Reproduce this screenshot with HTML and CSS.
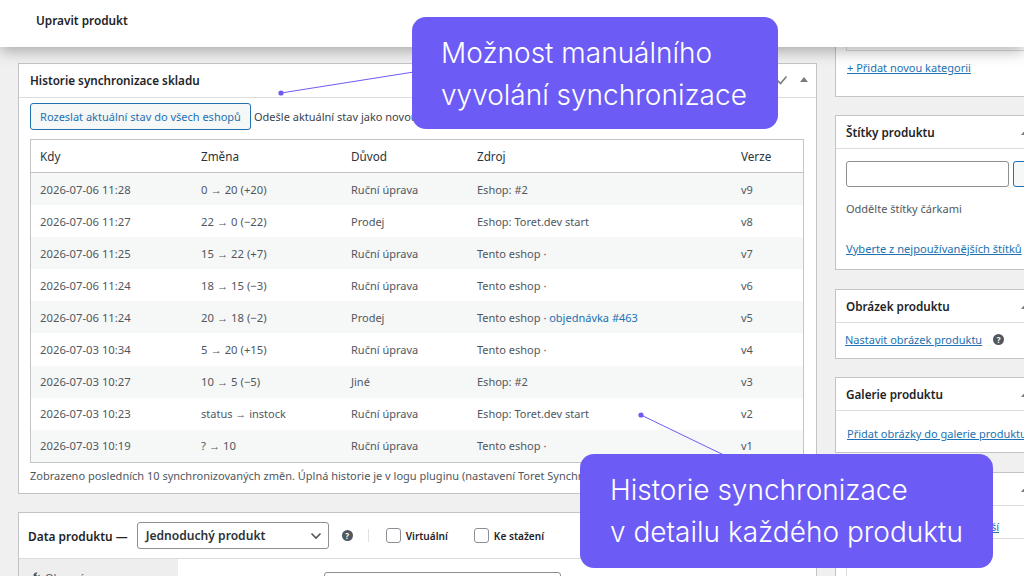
FILE: index.html
```html
<!DOCTYPE html>
<html lang="cs">
<head>
  <meta charset="UTF-8" />
  <title>Upravit produkt</title>
  <link rel="stylesheet" href="styles.css">
</head>
<body>

  <header class="top-bar">Upravit produkt</header>

  <div class="columns">
    <div class="main-col">

      <section class="box history-box">
        <div class="box-head main-head">
          <h2>Historie synchronizace skladu</h2>
          <div class="box-tools">
            <svg width="12" height="12" viewBox="0 0 12 12"><path d="M1.5 6.5 4.5 9.5 10.5 2.5" fill="none" stroke="#787c82" stroke-width="1.6"/></svg>
            <span class="caret"></span>
          </div>
        </div>
        <div class="history-body">
          <div class="sync-row">
            <button class="sync-btn">Rozeslat aktuální stav do všech eshopů</button>
            <span>Odešle aktuální stav jako novou verzi</span>
          </div>
          <table class="history">
            <thead>
              <tr><th class="c-when">Kdy</th><th class="c-change">Změna</th><th class="c-reason">Důvod</th><th class="c-source">Zdroj</th><th>Verze</th></tr>
            </thead>
            <tbody>
              <tr><td>2026-07-06 11:28</td><td>0 → 20 (+20)</td><td>Ruční úprava</td><td>Eshop: #2</td><td>v9</td></tr>
              <tr><td>2026-07-06 11:27</td><td>22 → 0 (−22)</td><td>Prodej</td><td>Eshop: Toret.dev start</td><td>v8</td></tr>
              <tr><td>2026-07-06 11:25</td><td>15 → 22 (+7)</td><td>Ruční úprava</td><td>Tento eshop ·</td><td>v7</td></tr>
              <tr><td>2026-07-06 11:24</td><td>18 → 15 (−3)</td><td>Ruční úprava</td><td>Tento eshop ·</td><td>v6</td></tr>
              <tr><td>2026-07-06 11:24</td><td>20 → 18 (−2)</td><td>Prodej</td><td>Tento eshop · <a href="#">objednávka #463</a></td><td>v5</td></tr>
              <tr><td>2026-07-03 10:34</td><td>5 → 20 (+15)</td><td>Ruční úprava</td><td>Tento eshop ·</td><td>v4</td></tr>
              <tr><td>2026-07-03 10:27</td><td>10 → 5 (−5)</td><td>Jiné</td><td>Eshop: #2</td><td>v3</td></tr>
              <tr><td>2026-07-03 10:23</td><td class="status">status → instock</td><td>Ruční úprava</td><td>Eshop: Toret.dev start</td><td>v2</td></tr>
              <tr><td>2026-07-03 10:19</td><td>? → 10</td><td>Ruční úprava</td><td>Tento eshop ·</td><td>v1</td></tr>
            </tbody>
          </table>
          <p class="note">Zobrazeno posledních 10 synchronizovaných změn. Úplná historie je v logu pluginu (nastavení Toret Synchronizace).</p>
        </div>
      </section>

      <section class="box data-box">
        <div class="data-head">
          <strong>Data produktu —</strong>
          <div class="fake-select">
            <span>Jednoduchý produkt</span>
            <svg width="12" height="8" viewBox="0 0 12 8"><path d="M1.5 1.5 6 6 10.5 1.5" fill="none" stroke="#50575e" stroke-width="1.6"/></svg>
          </div>
          <span class="help">?</span>
          <span class="divider"></span>
          <label class="check"><span class="checkbox"></span>Virtuální</label>
          <label class="check"><span class="checkbox"></span>Ke stažení</label>
        </div>
        <div class="data-body">
          <div class="data-tabs">
            <svg width="11" height="11" viewBox="0 0 11 11"><path d="M7.5 0.5a3 3 0 0 0-2.8 4L0.8 8.4a1.2 1.2 0 0 0 1.7 1.7L6.400 6.200a3 3 0 0 0 4-3.800L8.600 4.200 6.900 2.500 8.700 0.700a3 3 0 0 0-1.200-0.200z" fill="#50575e"/></svg>
            Obecné
          </div>
          <div class="data-panel"><div class="price-input"></div></div>
        </div>
      </section>
    </div>

    <aside class="side-col">
      <section class="box cat-box">
        <div class="cat-list"></div>
        <a href="#" class="cat-add">+ Přidat novou kategorii</a>
      </section>

      <section class="box tag-box">
        <div class="box-head side-head"><h2>Štítky produktu</h2><span class="caret"></span></div>
        <div class="tag-body">
          <div class="tag-input-row">
            <div class="tag-input"></div>
            <div class="tag-add"></div>
          </div>
          <p class="hint">Oddělte štítky čárkami</p>
          <a href="#">Vyberte z nejpoužívanějších štítků</a>
        </div>
      </section>

      <section class="box image-box">
        <div class="box-head side-head"><h2>Obrázek produktu</h2><span class="caret"></span></div>
        <div class="image-body"><a href="#">Nastavit obrázek produktu</a><span class="help">?</span></div>
      </section>

      <section class="box gallery-box">
        <div class="box-head side-head"><h2>Galerie produktu</h2><span class="caret"></span></div>
        <div class="gallery-body"><a href="#">Přidat obrázky do galerie produktu</a></div>
      </section>

      <section class="box brand-box">
        <div class="box-head side-head"><h2>Značky</h2><span class="caret"></span></div>
        <div class="brand-tabs"><a href="#">Nejpoužívanější</a></div>
        <div class="brand-list"></div>
      </section>
    </aside>
  </div>

  <svg class="connectors" width="1024" height="576" viewBox="0 0 1024 576">
    <line x1="281" y1="93" x2="420" y2="71"/>
    <circle cx="281" cy="93" r="2.6"/>
    <line x1="641" y1="415" x2="730" y2="458"/>
    <circle cx="641" cy="415" r="2.6"/>
  </svg>

  <div class="callout callout-top">Možnost manuálního<br>vyvolání synchronizace</div>
  <div class="callout callout-bottom">Historie synchronizace<br>v detailu každého produktu</div>

</body>
</html>
```

FILE: styles.css
```css
* {
  box-sizing: border-box;
}

html, body {
  height: 576px;
  overflow: hidden;
}

body {
  margin: 0;
  background: #f0f0f1;
  font-family: 'Noto Sans', sans-serif;
  font-size: 11px;
  color: #50575e;
}

a {
  color: #2271b1;
}

h2 {
  margin: 0;
  font-size: 11.7px;
  font-weight: 600;
  color: #1d2327;
}

.top-bar {
  position: relative;
  z-index: 2;
  height: 47px;
  padding: 12px 36px;
  background: #fff;
  font-size: 11.8px;
  font-weight: 600;
  color: #1d2327;
  box-shadow: 0 4px 14px rgba(0, 0, 0, 0.3);
}

.columns {
  display: flex;
  gap: 18px;
  padding-left: 18px;
}

.main-col {
  flex: 0 0 799px;
  padding-top: 16px;
}

.side-col {
  flex: 0 0 215px;
}

.box {
  background: #fff;
  border: 1px solid #c3c4c7;
}

.box-head {
  display: flex;
  justify-content: space-between;
  align-items: center;
  height: 34px;
  padding: 0 8px 0 11px;
  border-bottom: 1px solid #dcdcde;
}

.main-head {
  padding-bottom: 2px;
}

.box-tools {
  display: flex;
  align-items: center;
  gap: 12px;
}

.caret {
  width: 0;
  height: 0;
  border-left: 4px solid transparent;
  border-right: 4px solid transparent;
  border-bottom: 5px solid #787c82;
}

.history-box {
  height: 431px;
}

.history-body {
  padding: 5px 11px 0;
}

.sync-row {
  display: flex;
  align-items: center;
  gap: 3px;
  color: #3c434a;
}

.sync-btn {
  width: 221px;
  height: 27px;
  padding: 0;
  background: #f6f7f7;
  border: 1px solid #2271b1;
  border-radius: 3px;
  color: #2271b1;
  font: inherit;
}

.history {
  width: 774px;
  margin-top: 9px;
  border: 1px solid #c3c4c7;
  border-collapse: separate;
  border-spacing: 0;
  table-layout: fixed;
}

.history th {
  height: 33px;
  padding: 0 9px;
  text-align: left;
  font-size: 11.7px;
  font-weight: 400;
  color: #2c3338;
  border-bottom: 1px solid #c3c4c7;
}

.history td {
  height: 32.1px;
  padding: 0 9px;
}

/* digits run wider than the letters in the original font */
.history td:nth-child(-n+2) {
  font-size: 11.3px;
}

.history td.status {
  font-size: 11px;
}

.history tbody tr:nth-child(odd) {
  background: #f6f7f7;
}

.history a {
  text-decoration: none;
}

.c-when { width: 161px; }
.c-change { width: 150px; }
.c-reason { width: 126px; }
.c-source { width: 264px; }

.note {
  margin: 5px 0 0;
  white-space: nowrap;
}

.data-box {
  margin-top: 18px;
  height: 80px;
}

.data-head {
  display: flex;
  align-items: center;
  height: 46px;
  padding-left: 9px;
  border-bottom: 1px solid #dcdcde;
  color: #1d2327;
}

.data-head strong {
  font-size: 11.9px;
  font-weight: 600;
}

.fake-select {
  display: flex;
  justify-content: space-between;
  align-items: center;
  width: 192px;
  height: 27px;
  margin-left: 9px;
  padding: 0 6px 0 8px;
  border: 1px solid #8c8f94;
  border-radius: 3px;
  font-weight: 600;
  font-size: 12.1px;
  color: #2c3338;
}

.help {
  display: inline-flex;
  justify-content: center;
  align-items: center;
  width: 11px;
  height: 11px;
  border-radius: 50%;
  background: #50575e;
  color: #fff;
  font-size: 8px;
  font-weight: 700;
}

.data-head .help {
  margin-left: 13px;
}

.divider {
  width: 1px;
  height: 13px;
  margin: 0 17px 0 15px;
  background: #e0e0e0;
}

.check {
  display: flex;
  align-items: center;
  gap: 5px;
  margin-right: 26px;
  font-size: 10.1px;
  font-weight: 600;
}

.checkbox {
  width: 15px;
  height: 15px;
  border: 1px solid #8c8f94;
  border-radius: 3px;
}

.data-body {
  display: flex;
}

.data-tabs {
  display: flex;
  gap: 5px;
  width: 159px;
  height: 40px;
  padding: 11px 0 0 10px;
  background: #eee;
}

.data-tabs svg {
  margin-top: 2px;
}

.data-panel {
  padding: 13px 0 0 146px;
}

.price-input {
  width: 237px;
  height: 27px;
  border: 1px solid #8c8f94;
  border-radius: 3px;
}

.side-col .box {
  border-right: 0;
}

.side-head {
  height: 33px;
  padding: 0 21px 0 10px;
}

.cat-box {
  height: 50px;
  padding: 0 11px;
  border-top: 0;
}

.cat-list {
  height: 4px;
  border: 1px solid #dcdcde;
  border-top: 0;
  margin: 0 -11px 0 -1px;
}

.cat-add {
  display: block;
  margin-top: 9px;
}

.tag-box {
  margin-top: 18px;
  height: 155px;
}

.tag-body {
  padding: 12px 0 0 10px;
}

.tag-input-row {
  display: flex;
  gap: 4px;
}

.tag-input {
  flex: 0 0 163px;
  height: 26px;
  border: 1px solid #8c8f94;
  border-radius: 3px;
}

.tag-add {
  flex: 0 0 30px;
  height: 26px;
  border: 1px solid #2271b1;
  border-radius: 3px;
  background: #f6f7f7;
}

.hint {
  margin: 14px 0 25px;
}

.tag-body a {
  font-size: 11.1px;
  white-space: nowrap;
}

.image-box {
  margin-top: 19px;
  height: 70px;
}

.image-body {
  display: flex;
  align-items: center;
  gap: 11px;
  height: 33px;
  padding-left: 9px;
}

.gallery-box {
  margin-top: 18px;
  height: 76px;
}

.gallery-body {
  padding: 15px 0 0 11px;
  white-space: nowrap;
}

.brand-box {
  margin-top: 19px;
  height: 120px;
}

.brand-tabs {
  height: 33px;
  padding: 13px 51px 0 0;
  text-align: right;
  border-bottom: 1px solid #dcdcde;
}

.brand-list {
  margin: 0 0 0 10px;
  height: 60px;
  border: 1px solid #dcdcde;
  border-top: 0;
}

.connectors {
  position: absolute;
  top: 0;
  left: 0;
  z-index: 3;
}

.connectors line {
  stroke: #6c5cf5;
  stroke-width: 1;
}

.connectors circle {
  fill: #6c5cf5;
}

.callout {
  position: absolute;
  z-index: 4;
  padding: 15px 0 0 29px;
  background: #6c5cf5;
  border-radius: 14px;
  color: #fff;
  font-family: 'Inter', sans-serif;
  font-size: 28px;
  font-weight: 300;
  line-height: 42px;
}

.callout-top {
  top: 17px;
  left: 412px;
  width: 366px;
  height: 112px;
}

.callout-bottom {
  top: 454px;
  left: 580px;
  width: 413px;
  height: 114px;
  padding-left: 30px;
}
```
